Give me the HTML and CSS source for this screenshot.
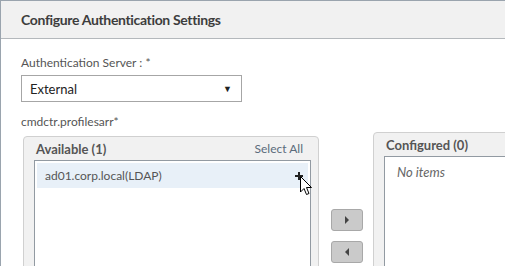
FILE: index.html
```html
<!DOCTYPE html>
<html lang="en">
<head>
  <meta charset="UTF-8">
  <title>Configure Authentication Settings</title>
  <link rel="stylesheet" href="styles.css">
</head>
<body>
  <div class="dialog">
    <div class="dialog-header">
      <h1>Configure Authentication Settings</h1>
    </div>
    <div class="dialog-body">
      <label class="field-label">Authentication Server : *</label>
      <div class="select">
        <span>External</span>
        <span class="select-arrow">&#9660;</span>
      </div>
      <div class="field-label sub">cmdctr.profilesarr*</div>
      <div class="picker">
        <div class="panel available">
          <div class="panel-head">
            <span class="panel-title">Available (1)</span>
            <span class="select-all">Select All</span>
          </div>
          <div class="list">
            <div class="list-item">
              <span>ad01.corp.local(LDAP)</span>
              <svg class="add" width="8" height="8" viewBox="0 0 8 8">
                <path d="M0 3h8v2H0zM3 0h2v8H3z" fill="#222"/>
              </svg>
              <svg class="cursor" width="13" height="21" viewBox="0 0 13 21">
                <path d="M0.5 0.5 L0.5 16 L4 12.5 L6.5 18.5 L9 17.5 L6.5 11.5 L11.5 11.5 Z" fill="#fff" stroke="#000" stroke-width="1"/>
              </svg>
            </div>
          </div>
        </div>
        <div class="move-buttons">
          <button class="move-btn"><span class="tri-right"></span></button>
          <button class="move-btn"><span class="tri-left"></span></button>
        </div>
        <div class="panel configured">
          <div class="panel-head">
            <span class="panel-title">Configured (0)</span>
          </div>
          <div class="list">
            <div class="empty">No items</div>
          </div>
        </div>
      </div>
    </div>
  </div>
</body>
</html>
```
FILE: styles.css
```css
body {
  margin: 0;
  background: #fff;
  font-family: 'Lato', 'Open Sans', sans-serif;
  color: #444;
  overflow: hidden;
  height: 266px;
}
.dialog {
  border-left: 1px solid #9aa4ae;
  border-top: 1px solid #9aa4ae;
  height: 265px;
  overflow: hidden;
}
.dialog-header {
  height: 37px;
  background: #f1f1f1;
  border-bottom: 1px solid #b4b8bc;
  display: flex;
  align-items: center;
  padding-left: 20px;
}
.dialog-header h1 {
  margin: 0;
  font-size: 14px;
  font-weight: 700;
  letter-spacing: -0.35px;
  color: #3d3d3d;
}
.dialog-body {
  padding: 16px 20px 0 20px;
}
.field-label {
  display: block;
  font-size: 12px;
  color: #555;
  line-height: 16px;
}
.field-label.sub {
  margin-top: 12px;
}
.select {
  margin-top: 4px;
  height: 25px;
  width: 202px;
  border: 1px solid #a6a6a6;
  display: flex;
  align-items: center;
  justify-content: space-between;
  padding: 0 9px 0 8px;
  font-size: 13px;
  color: #222;
}
.select-arrow {
  font-size: 9px;
  color: #222;
}
.picker {
  display: flex;
  align-items: flex-start;
  margin-top: 2px;
}
.panel {
  flex-shrink: 0;
  background: #f1f1f1;
  border: 1px solid #d0d0d0;
  border-radius: 4px;
  height: 200px;
  box-sizing: border-box;
}
.available {
  margin-top: 4px;
  margin-left: 2px;
  width: 296px;
  padding: 0 7px 0 10px;
}
.configured {
  width: 160px;
  padding: 0 0 0 10px;
  margin-left: 10px;
}
.panel-head {
  height: 23px;
  display: flex;
  align-items: center;
  justify-content: space-between;
  padding: 0 2px;
}
.panel-title {
  font-size: 13px;
  font-weight: 700;
  color: #555;
}
.select-all {
  font-size: 12px;
  color: #5b6b7b;
  margin-right: 6px;
}
.list {
  background: #fff;
  border: 1px solid #929aa2;
  height: 200px;
  padding: 2px;
}
.list-item {
  position: relative;
  height: 25px;
  background: #e8f0f8;
  display: flex;
  align-items: center;
  justify-content: space-between;
  padding: 0 8px;
  font-size: 12px;
  color: #555;
}
.add {
  margin-right: -3px;
}
.cursor {
  position: absolute;
  right: -5px;
  top: 13px;
}
.empty {
  font-style: italic;
  font-size: 13px;
  color: #666;
  padding: 5px 10px;
}
.move-buttons {
  flex-shrink: 0;
  display: flex;
  flex-direction: column;
  gap: 10px;
  margin-top: 77px;
  margin-left: 12px;
}
.move-btn {
  width: 32px;
  height: 22px;
  background: #cacaca;
  border: 1px solid #a8a8a8;
  border-radius: 3px;
  padding: 0;
  display: flex;
  align-items: center;
  justify-content: center;
}
.tri-right {
  border-left: 4px solid #444;
  border-top: 4px solid transparent;
  border-bottom: 4px solid transparent;
}
.tri-left {
  border-right: 4px solid #444;
  border-top: 4px solid transparent;
  border-bottom: 4px solid transparent;
}
```
